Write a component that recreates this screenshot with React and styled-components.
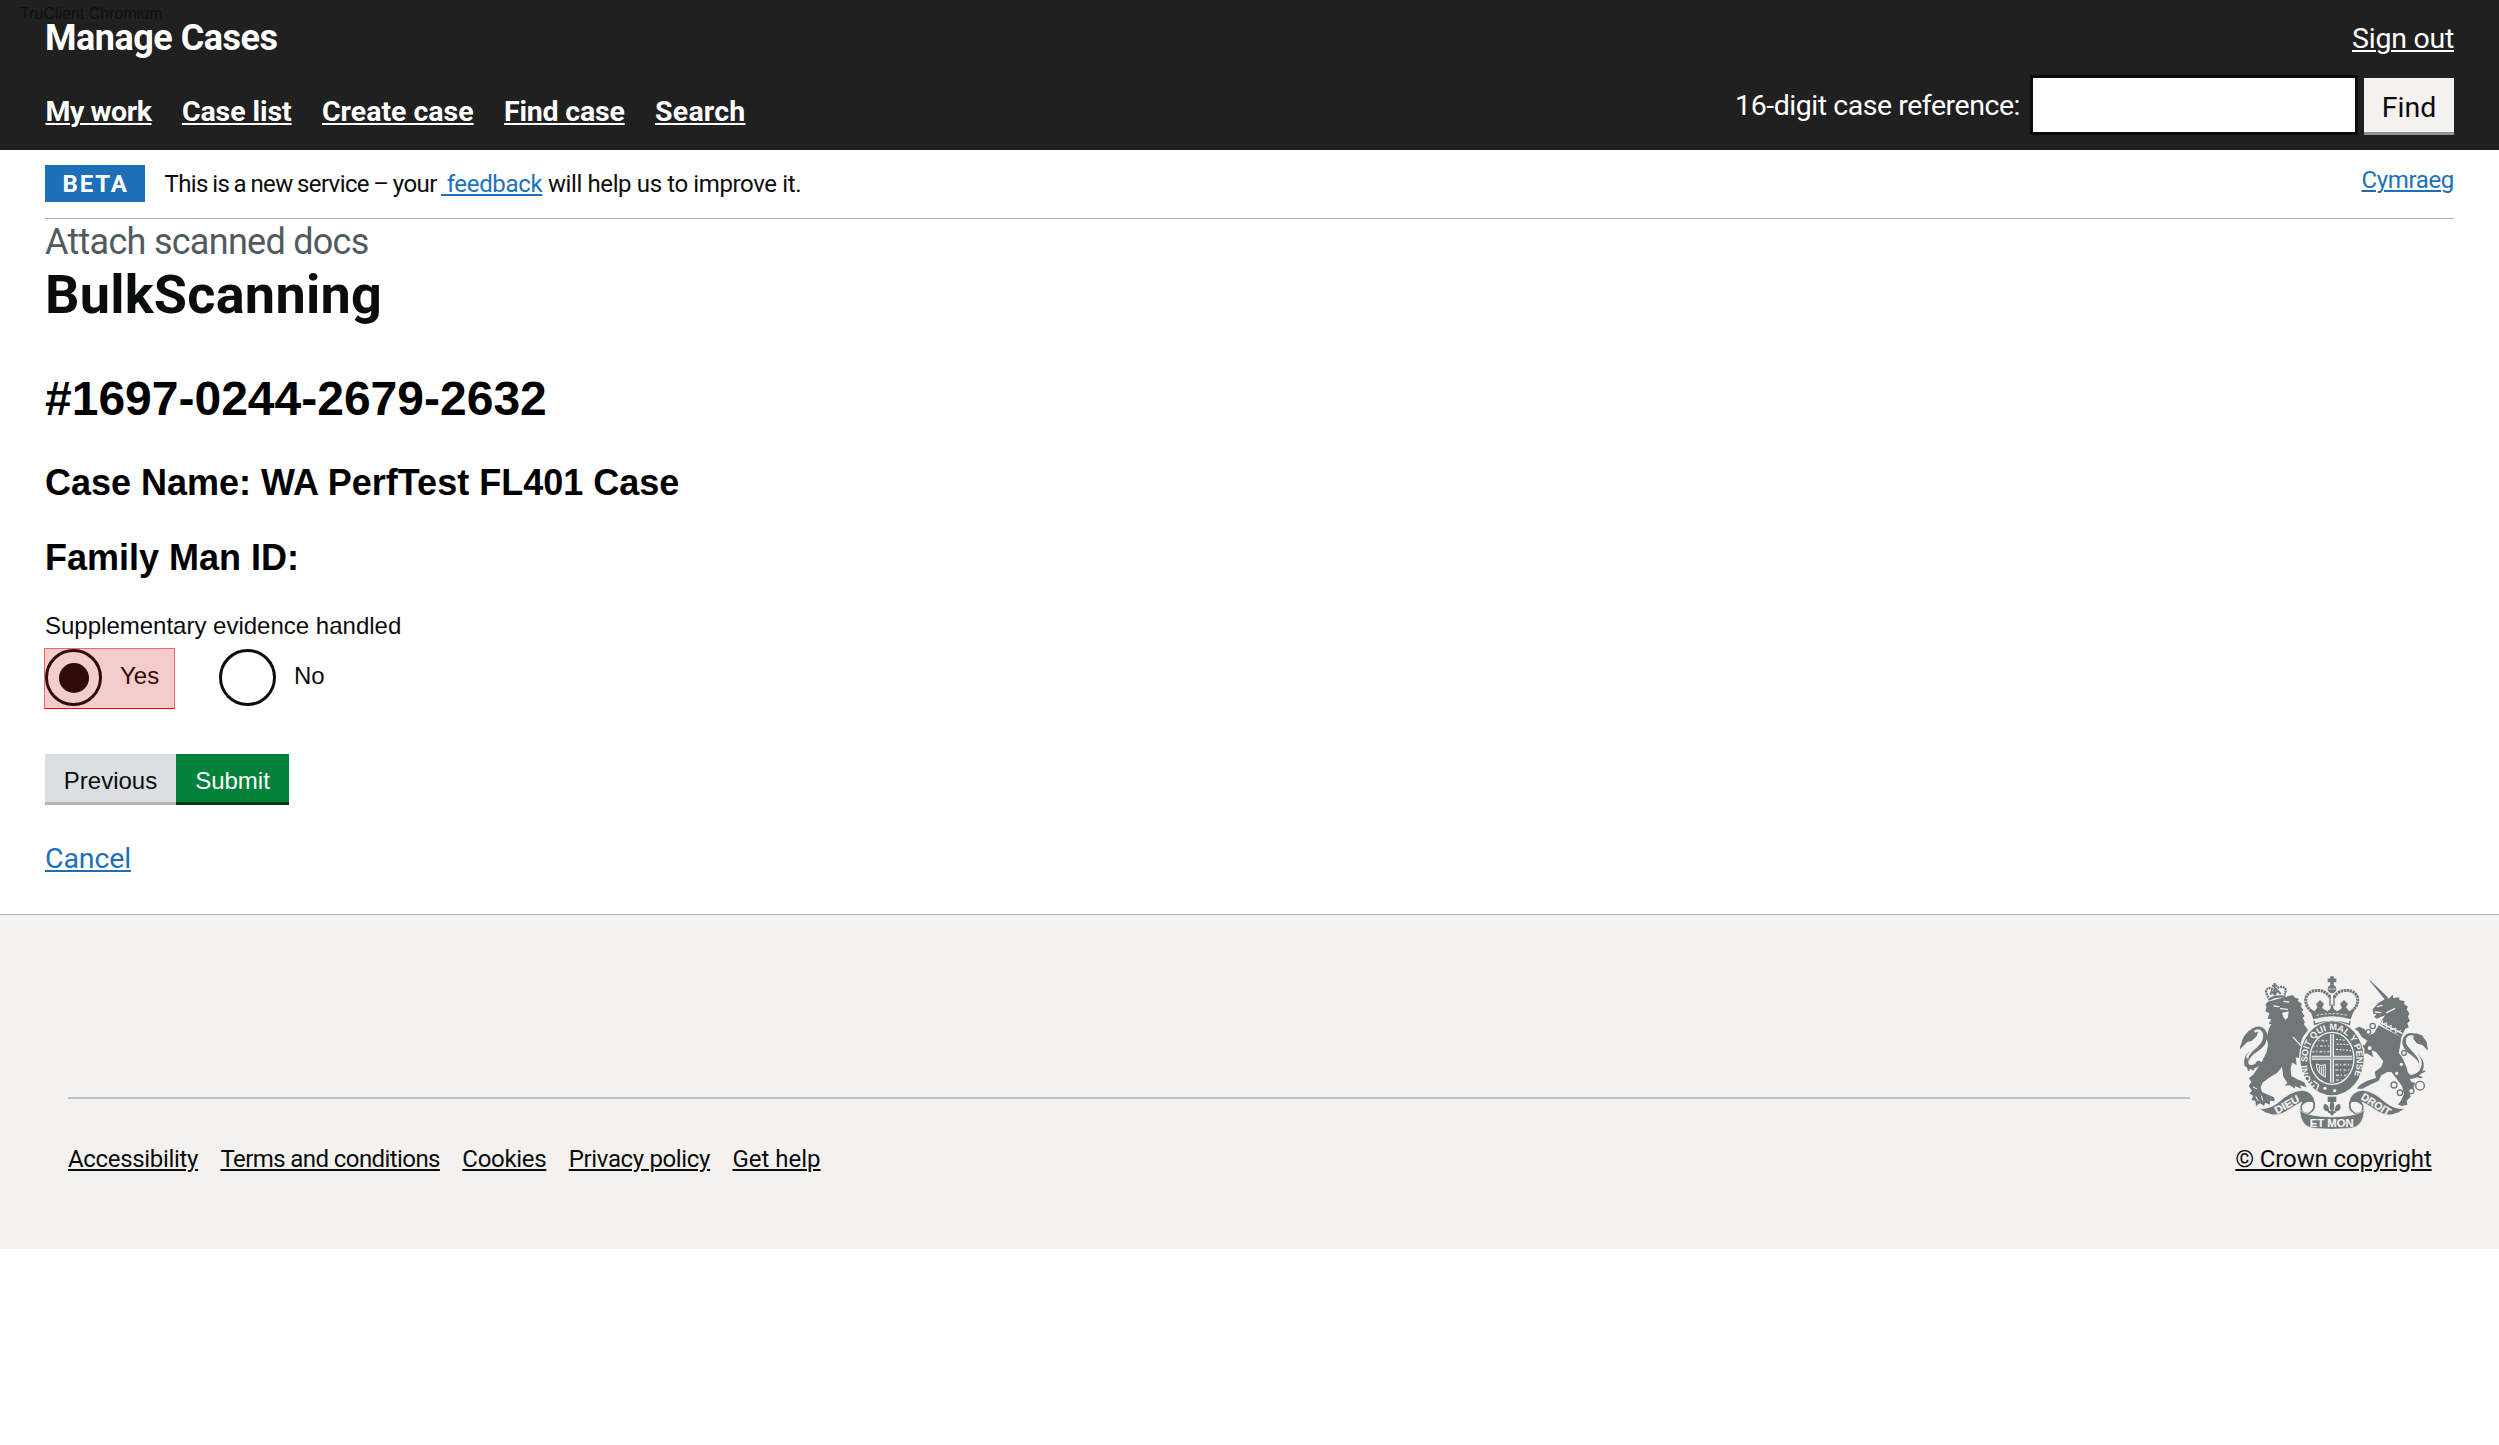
import React from 'react';
import styled, { createGlobalStyle, css } from 'styled-components';

const GlobalStyle = createGlobalStyle`
  *, *::before, *::after { box-sizing: border-box; }
  html, body { margin: 0; padding: 0; background: #fff; }
  body { color: #0b0c0c; font-family: Roboto, "Liberation Sans", sans-serif; }
  h1, h2, h3, p, ul { margin: 0; padding: 0; font-weight: inherit; }
  ul { list-style: none; }
`;

const arial = css`font-family: "Liberation Sans", Arial, sans-serif;`;
const tracking = css`
  letter-spacing: ${({ $track = 0 }) => $track}px;
  white-space: nowrap;
`;

const Link = styled.a`
  ${tracking}
  color: ${({ $tone = '#1d70b8' }) => $tone};
  text-decoration: underline;
  text-decoration-thickness: 2px;
  text-underline-offset: 2px;
`;

/* Header */
const Header = styled.header`
  display: flex;
  flex-direction: column;
  gap: 16px;
  height: 150px;
  padding: 18px 45px 15px;
  background: #202020;
  color: #fff;
  font-size: 28.5px;
`;
const HeaderRow = styled.div`
  display: flex;
  justify-content: space-between;
  line-height: 40px;
`;
const ServiceName = styled.div`
  font-size: 36px;
  font-weight: 700;
  letter-spacing: -0.5px;
`;
const SignOut = styled.div`
  padding-top: 1px;
`;
const BrowserTag = styled.div`
  ${arial}
  position: absolute;
  top: 5px;
  left: 20px;
  font-size: 16px;
  line-height: 18px;
  color: #101010;
`;
const Nav = styled.nav`
  display: flex;
  gap: 30.4px;
  height: 60px;
  padding: 13px 0 0 0.5px;
  line-height: 48px;
  font-weight: 700;
`;
const CaseSearch = styled.form`
  display: flex;
  align-items: center;
  height: 60px;
`;
const SearchLabel = styled.label`
  letter-spacing: -0.46px;
  margin-right: 10px;
  padding-top: 2px;
`;
const SearchInput = styled.input`
  width: 328px;
  height: 60px;
  margin-right: 6px;
  border: 3px solid #0b0c0c;
  border-radius: 0;
  background: #fff;
`;
const FindButton = styled.button`
  align-self: flex-end;
  width: 90px;
  height: 57px;
  padding: 5px 0 0;
  border: 0;
  border-bottom: 3px solid #929191;
  background: #f3f2f1;
  color: #0b0c0c;
  font: 400 28.5px Roboto, sans-serif;
`;

/* Phase banner */
const Page = styled.main`
  padding: 0 45px 37px;
`;
const PhaseBanner = styled.div`
  display: flex;
  height: 69px;
  padding-top: 15px;
  border-bottom: 1px solid #b1b4b6;
  font-size: 24px;
  line-height: 39px;
`;
const PhaseTag = styled.strong`
  width: 100px;
  height: 37px;
  padding-left: 17.5px;
  margin-right: 19.5px;
  background: #1d70b8;
  color: #fff;
  letter-spacing: 1.9px;
`;
const PhaseText = styled.p`
  flex: 1;
  white-space: pre;
`;
const Phrase = styled.span`
  ${tracking}
  white-space: pre;
  word-spacing: ${({ $word = 0 }) => $word}px;
`;
const Language = styled.div`
  line-height: 31px;
`;

/* Event form */
const EventCaption = styled.p`
  padding-top: 1px;
  font-size: 36px;
  line-height: 45px;
  letter-spacing: -0.72px;
  color: #505a5f;
`;
const EventTitle = styled.h1`
  font-size: 54px;
  line-height: 60px;
  font-weight: 700;
  letter-spacing: 0.25px;
`;
const CaseNumber = styled.h2`
  ${arial}
  margin-top: 46px;
  font-size: 48px;
  line-height: 56px;
  font-weight: 700;
  color: #000;
`;
const CaseField = styled.h3`
  ${arial}
  margin-top: ${({ $gap }) => $gap}px;
  font-size: 36px;
  line-height: 42px;
  font-weight: 700;
  color: #000;
`;
const Question = styled.p`
  ${arial}
  margin-top: 32px;
  font-size: 24px;
  line-height: 30px;
`;
const Radios = styled.div`
  ${arial}
  display: flex;
  gap: 44px;
  height: 61px;
  margin-top: 7px;
  font-size: 24px;
  line-height: 53px;
`;
const RadioOption = styled.label`
  position: relative;
  display: flex;
  gap: 18px;
  padding-top: 1px;
  width: ${({ $wide }) => ($wide ? 130 : 110)}px;
`;
const RadioRing = styled.span`
  display: grid;
  place-items: center;
  width: 57px;
  height: 57px;
  border: 3px solid #0b0c0c;
  border-radius: 50%;
`;
const RadioDot = styled.span`
  width: 30px;
  height: 30px;
  border-radius: 50%;
  background: #0b0c0c;
`;
const ClickHighlight = styled.span`
  position: absolute;
  inset: 0 0 0 -1px;
  border: 1px solid rgba(255, 0, 0, 0.5);
  border-bottom-color: #f00;
  background: rgba(200, 0, 0, 0.2);
`;
const Actions = styled.div`
  display: flex;
  margin: 45px 0 36px;
`;
const ActionButton = styled.button`
  width: ${({ $primary }) => ($primary ? 113 : 131)}px;
  height: 51px;
  padding: 5px 0 0;
  border: 0;
  border-bottom: 3px solid ${({ $primary }) => ($primary ? '#003618' : '#b1b5b8')};
  background: ${({ $primary }) => ($primary ? '#00823b' : '#dbdfe2')};
  color: ${({ $primary }) => ($primary ? '#fff' : '#0b0c0c')};
  font: 400 24px "Liberation Sans", Arial, sans-serif;
`;
const CancelLine = styled.p`
  font-size: 28.5px;
  line-height: 36px;
`;

/* Footer */
const Footer = styled.footer`
  display: flex;
  gap: 45px;
  height: 335px;
  padding: 61px 67px 0 68px;
  border-top: 1px solid #b1b4b6;
  background: #f3f2f1;
  font-size: 24px;
  line-height: 30px;
`;
const FooterLinks = styled.ul`
  display: flex;
  flex: 1;
  gap: 22.4px;
  margin-top: 121px;
  padding-top: 45px;
  border-top: 2px solid #bfc1c3;
`;
const CrownBlock = styled.div`
  display: flex;
  flex-direction: column;
  align-items: center;
  gap: 15px;
  width: 197px;
`;

const INK = '#6f7779';
const PAPER = '#f3f2f1';

const Crest = styled.svg`
  display: block;
  width: 188px;
  height: 153px;
  font-family: "Liberation Sans", Arial, sans-serif;
  font-weight: 700;
`;

const chain = [[518, 228, 8], [505, 246, 7], [509, 294, 8], [612, 309, 7], [604, 343, 7], [590, 370, 7], [582, 405, 9], [600, 428, 8], [634, 423, 8], [660, 407, 13]];

function RoyalArms() {
  return (
    <Crest viewBox="120 78 564 459" aria-label="Royal coat of arms">
      <g fill={INK}>
        {/* lion */}
        <path d="M203 155 278 135 285 143 297 146 293 152 306 162 302 168 310 180 305 185 314 198 308 203 315 217 311 222 324 240 308 262 302 280 318 298 314 318 324 333 310 345 298 338 302 325 287 322 290 345 276 338 272 356 274 378 292 388 312 396 320 412 300 406 304 416 284 408 286 416 268 405 254 408 262 398 250 380 246 350 232 368 206 384 188 398 182 412 186 426 204 434 222 442 224 454 210 452 210 464 196 458 192 468 180 460 168 468 166 452 154 450 160 438 148 430 156 422 146 408 154 396 147 384 160 374 172 356 186 334 200 306 204 286 200 262 206 238 214 222 206 222 214 208 203 206 208 190 196 184 200 172 196 164Z" />
        {/* unicorn */}
        <path d="M507 88 562 140 566 146 578 134 580 144 598 142 598 150 614 154 612 162 624 170 620 178 628 190 624 200 630 212 622 220 626 232 616 236 604 262 540 222 548 206 556 196 544 200 530 206 522 200 530 192 520 192 518 178 534 160 554 148 510 94Z" />
        <path d="M536 226 604 262 600 290 596 308 606 322 620 352 626 378 634 396 646 398 640 414 628 422 632 440 620 452 622 464 606 468 594 464 604 450 612 432 606 408 588 384 574 366 562 366 544 376 536 392 510 404 488 416 470 416 480 404 502 392 528 384 524 366 544 350 550 334 528 306 514 300 520 322 500 310 484 316 494 298 480 282 494 286 502 272 486 262 474 244 464 236 478 230 494 238 506 256 522 250Z" />
        {/* tail tufts */}
        <path d="M120 292 130 262 146 242 164 236 176 242 170 258 156 272 142 276 120 298Z" />
        <path d="M684 302 680 276 666 256 648 250 634 256 640 266 650 280 668 286Z" />
      </g>
      <g fill="none" strokeLinecap="round">
        <path d="M160 242C186 228 202 248 190 276 182 296 152 302 142 324 134 348 152 358 176 340" stroke={INK} strokeWidth="15" />
        <path d="M166 244C182 236 192 252 182 274 172 294 148 298 142 322 138 340 152 346 164 338" stroke={PAPER} strokeWidth="7" />
        <path d="M136 346 160 358M140 326 146 360" stroke={INK} strokeWidth="6" />
        <path d="M644 258C616 250 606 276 622 296 638 314 668 324 664 350 660 378 632 384 624 376" stroke={INK} strokeWidth="14" />
        <path d="M638 260C618 256 616 276 630 292 646 310 668 326 660 350 656 366 640 372 630 370" stroke={PAPER} strokeWidth="7" />
        <path d="M652 372 674 364M644 378 664 382" stroke={INK} strokeWidth="5" />
      </g>
      {/* faces, claws and collar */}
      <g stroke={PAPER} strokeWidth="4" fill="none" strokeLinecap="round">
        <path d="M222 168 236 170M252 154 266 156M242 176 262 178M532 170 546 166M526 186 542 188M560 188 584 176M534 214 606 250M280 262 302 286" />
        <path d="M548 212 546 224 560 218 560 232 574 226 572 240 588 234 586 248 602 242" strokeWidth="3" />
        <path d="M168 440 174 452M184 438 188 450M160 412 170 416" strokeWidth="3" />
      </g>
      <path d="M246 188 266 184 264 202 256 210 250 200Z" fill={PAPER} />
      {/* lion's crown */}
      <g fill="none" stroke={INK}>
        <path d="M205 149Q228 136 256 140" strokeWidth="7" />
        <path d="M206 142C188 120 206 104 224 122 238 102 268 110 253 134" strokeWidth="7" strokeDasharray="6 2" />
        <path d="M224 99V136M216 107H232M211 134 215 124 224 134 233 122 242 132" strokeWidth="6" />
      </g>
      {/* imperial crown */}
      <g fill="none" stroke={INK}>
        <path d="M334 184C312 164 310 136 336 124 362 116 382 126 390 144" strokeWidth="9" strokeDasharray="7 2" />
        <path d="M456 184C478 164 480 136 456 124 430 116 410 126 402 144" strokeWidth="9" strokeDasharray="7 2" />
        <path d="M396 79V104M383 91H409" strokeWidth="11" />
        <path d="M390 134V168M402 134V168" strokeWidth="4" />
      </g>
      <g fill={INK}>
        <circle cx="396" cy="117" r="13" />
        <path d="M328 174 344 184 352 172 348 162 360 150 372 162 366 174 382 184 390 178 396 160 402 178 412 184 426 174 420 162 432 150 444 162 438 172 448 184 464 174 452 208Q396 190 340 208Z" />
        <path d="M340 212Q396 194 452 212L450 226Q396 206 342 226Z" />
      </g>
      <path d="M345 215Q396 200 448 215" stroke={PAPER} strokeWidth="10" fill="none" />
      <path d="M350 196Q396 186 442 196" stroke={PAPER} strokeWidth="3" fill="none" strokeDasharray="7 5" />
      <path d="M385 117H407" stroke={PAPER} strokeWidth="2" />
      {/* garter */}
      <ellipse cx="396" cy="325" rx="99" ry="113" fill={PAPER} />
      <ellipse cx="396" cy="325" rx="95" ry="111" fill={INK} />
      <ellipse cx="396" cy="325" rx="66" ry="78" fill="none" stroke={PAPER} strokeWidth="4" />
      <defs>
        <path id="garter" d="M346 408A73 85 0 0 1 323 325A73 85 0 0 1 396 240A73 85 0 0 1 469 325A73 85 0 0 1 442 404" />
        <clipPath id="shield"><ellipse cx="396" cy="325" rx="61" ry="73" /></clipPath>
      </defs>
      <text fill={PAPER} fontSize="27"><textPath href="#garter" textLength="390" lengthAdjust="spacingAndGlyphs">HONI SOIT QUI MAL Y PENSE</textPath></text>
      {/* quartered shield */}
      <g clipPath="url(#shield)">
        <g stroke={PAPER} strokeWidth="5" strokeDasharray="9 5 4 6" opacity="0.7">
          <path d="M340 272H388M336 288H388M334 305H388M406 344H460M406 360H454M408 376H446M408 390H430" />
        </g>
        <g stroke={PAPER} fill="none" strokeWidth="3">
          <path d="M408 268 448 272M410 282 452 284M408 298 456 302" strokeDasharray="6 4" />
          <path d="M350 342Q346 366 376 382V344Q362 350 350 342M358 348V370M364 350V376M370 348V378" />
        </g>
        <path d="M396 250V402M332 323H460" stroke={PAPER} strokeWidth="12" />
        <path d="M396 250V402M332 323H460" stroke={INK} strokeWidth="6" opacity="0.6" />
      </g>
      <circle cx="375" cy="415" r="5" fill={PAPER} />
      <circle cx="404" cy="422" r="5" fill={PAPER} />
      <path d="M340 392 356 404 350 420" stroke={PAPER} strokeWidth="4" fill="none" />
      {/* chain */}
      {chain.map(([x, y, r]) => (
        <circle key={`${x}-${y}`} cx={x} cy={y} r={r} fill={PAPER} stroke={INK} strokeWidth="4" />
      ))}
      {/* motto ribbon */}
      <g fill={INK} stroke={PAPER} strokeWidth="3">
        <path d="M174 474Q206 480 236 456 270 424 306 420 340 424 346 458 350 484 330 490L304 490Q296 466 306 456 280 470 256 486 220 510 174 474Z" />
        <path d="M618 474Q586 480 556 456 522 424 488 420 452 424 446 458 442 484 462 490L488 490Q496 466 486 456 512 470 536 486 572 510 618 474Z" />
      </g>
      <g fill={PAPER} stroke={INK} strokeWidth="4">
        <path d="M304 466Q322 448 340 456 348 476 328 490 300 494 304 466Z" />
        <path d="M488 466Q470 448 452 456 444 476 464 490 492 494 488 466Z" />
      </g>
      <path d="M299 480Q316 498 396 501 476 498 493 480 490 528 456 534 396 542 336 534 302 528 299 480Z" fill={INK} stroke={PAPER} strokeWidth="2" />
      <g fill={PAPER} stroke={PAPER} strokeWidth="0.6" textAnchor="middle">
        <text x="395" y="530" fontSize="35" textLength="132" lengthAdjust="spacingAndGlyphs">ET MON</text>
        <text transform="translate(266 473) rotate(-29)" fontSize="32" textLength="80" lengthAdjust="spacingAndGlyphs">DIEU</text>
        <text transform="translate(522 472) rotate(32)" fontSize="32" textLength="98" lengthAdjust="spacingAndGlyphs">DROIT</text>
      </g>
      <g fill={INK}>
        <path d="M383 440H409V456H383Z" />
        <path d="M396 450Q408 466 400 482H392Q384 466 396 450ZM388 484C370 486 366 470 374 462 382 462 388 470 388 484ZM404 484C422 486 426 470 418 462 410 462 404 470 404 484ZM384 483H408V488H384ZM396 498 404 488H388Z" />
      </g>
    </Crest>
  );
}

const navItems = [['My work', -0.44], ['Case list', -0.08], ['Create case', 0], ['Find case', -0.2], ['Search', 0.2]];
const footerItems = [['Accessibility', -0.33], ['Terms and conditions', -0.58], ['Cookies', -0.3], ['Privacy policy', -0.35], ['Get help', 0]];

export default function App() {
  return (
    <>
      <GlobalStyle />
      <BrowserTag>TruClient Chromium</BrowserTag>
      <Header>
        <HeaderRow>
          <ServiceName>Manage Cases</ServiceName>
          <SignOut><Link $tone="#fff" $track={-0.25}>Sign out</Link></SignOut>
        </HeaderRow>
        <HeaderRow>
          <Nav>
            {navItems.map(([name, track]) => (
              <Link key={name} $tone="#fff" $track={track}>{name}</Link>
            ))}
          </Nav>
          <CaseSearch>
            <SearchLabel>16-digit case reference:</SearchLabel>
            <SearchInput />
            <FindButton type="button">Find</FindButton>
          </CaseSearch>
        </HeaderRow>
      </Header>
      <Page>
        <PhaseBanner>
          <PhaseTag>BETA</PhaseTag>
          <PhaseText>
            <Phrase $track={-0.6} $word={-1}>This is a new service – your </Phrase>
            <Link $track={-0.33}> feedback</Link>
            <Phrase $track={-0.38}> will help us to improve it.</Phrase>
          </PhaseText>
          <Language><Link $track={-0.34}>Cymraeg</Link></Language>
        </PhaseBanner>
        <EventCaption>Attach scanned docs</EventCaption>
        <EventTitle>BulkScanning</EventTitle>
        <CaseNumber>#1697-0244-2679-2632</CaseNumber>
        <CaseField $gap={35}>Case Name: WA PerfTest FL401 Case</CaseField>
        <CaseField $gap={33}>Family Man ID:</CaseField>
        <Question>Supplementary evidence handled</Question>
        <Radios>
          <RadioOption $wide>
            <RadioRing><RadioDot /></RadioRing>
            Yes
            <ClickHighlight />
          </RadioOption>
          <RadioOption>
            <RadioRing />
            No
          </RadioOption>
        </Radios>
        <Actions>
          <ActionButton>Previous</ActionButton>
          <ActionButton $primary>Submit</ActionButton>
        </Actions>
        <CancelLine><Link $track={-0.13}>Cancel</Link></CancelLine>
      </Page>
      <Footer>
        <FooterLinks>
          {footerItems.map(([name, track]) => (
            <li key={name}><Link $tone="#0b0c0c" $track={track}>{name}</Link></li>
          ))}
        </FooterLinks>
        <CrownBlock>
          <RoyalArms />
          <Link $tone="#0b0c0c" $track={-0.14}>© Crown copyright</Link>
        </CrownBlock>
      </Footer>
    </>
  );
}
